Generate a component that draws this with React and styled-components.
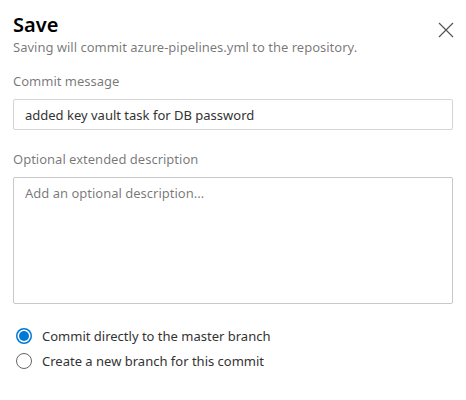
import React from "react";
import styled, { createGlobalStyle } from "styled-components";

const Global = createGlobalStyle`
  html, body { margin: 0; padding: 0; background: #fff; }
  body { font-family: "Noto Sans", "Open Sans", sans-serif; }
  * { box-sizing: border-box; }
`;

const Panel = styled.div`
  width: 466px;
  height: 400px;
  padding: 12px 13px 0 13px;
  display: flex;
  flex-direction: column;
  background: #fff;
`;

const Header = styled.div`
  display: flex;
  justify-content: space-between;
  align-items: flex-start;
`;

const TitleBlock = styled.div`
  display: flex;
  flex-direction: column;
`;

const Title = styled.h1`
  margin: 0;
  font-size: 20px;
  line-height: 26px;
  font-weight: 600;
  color: #000;
`;

const Subtitle = styled.p`
  margin: 0;
  font-size: 13px;
  line-height: 18px;
  color: rgba(0, 0, 0, 0.55);
`;

const CloseButton = styled.button`
  border: none;
  background: none;
  padding: 0;
  margin: 6px -5px 0 0;
  width: 24px;
  height: 24px;
  display: flex;
  align-items: center;
  justify-content: center;
  cursor: pointer;
`;

const Field = styled.div`
  display: flex;
  flex-direction: column;
  margin-top: ${(p) => p.$top}px;
`;

const Label = styled.label`
  font-size: 13px;
  line-height: 18px;
  color: rgba(0, 0, 0, 0.55);
  margin-bottom: 9px;
`;

const Input = styled.div`
  height: 31px;
  border: 1px solid #d4d4d4;
  border-radius: 2px;
  padding: 0 11px;
  display: flex;
  align-items: center;
  font-size: 13px;
  color: #333;
`;

const TextArea = styled.div`
  height: 127px;
  border: 1px solid #c8c8c8;
  border-radius: 2px;
  padding: 6px 11px;
  font-size: 13px;
  line-height: 18px;
  color: rgba(0, 0, 0, 0.55);
`;

const RadioGroup = styled.div`
  margin-top: 23px;
  display: flex;
  flex-direction: column;
  gap: 7px;
`;

const RadioRow = styled.div`
  display: flex;
  align-items: center;
  gap: 10px;
  font-size: 13px;
  line-height: 18px;
  color: #333;
`;

const RadioCircle = styled.span`
  width: 16px;
  height: 16px;
  border-radius: 50%;
  margin-left: 3px;
  border: ${(p) => (p.$checked ? "none" : "1px solid #666")};
  background: ${(p) => (p.$checked ? "#0078d4" : "#fff")};
  display: flex;
  align-items: center;
  justify-content: center;
  &::after {
    content: "";
    display: ${(p) => (p.$checked ? "block" : "none")};
    width: 10px;
    height: 10px;
    border-radius: 50%;
    background: #0078d4;
    box-shadow: 0 0 0 1.5px #fff;
  }
`;

export default function App() {
  return (
    <>
      <Global />
      <Panel>
        <Header>
          <TitleBlock>
            <Title>Save</Title>
            <Subtitle>Saving will commit azure-pipelines.yml to the repository.</Subtitle>
          </TitleBlock>
          <CloseButton aria-label="Close">
            <svg width="16" height="16" viewBox="0 0 16 16">
              <path d="M1 1 L15 15 M15 1 L1 15" stroke="#555" strokeWidth="1.2" fill="none" />
            </svg>
          </CloseButton>
        </Header>
        <Field $top={16}>
          <Label>Commit message</Label>
          <Input>added key vault task for DB password</Input>
        </Field>
        <Field $top={20}>
          <Label>Optional extended description</Label>
          <TextArea>Add an optional description...</TextArea>
        </Field>
        <RadioGroup>
          <RadioRow>
            <RadioCircle $checked />
            Commit directly to the master branch
          </RadioRow>
          <RadioRow>
            <RadioCircle />
            Create a new branch for this commit
          </RadioRow>
        </RadioGroup>
      </Panel>
    </>
  );
}
